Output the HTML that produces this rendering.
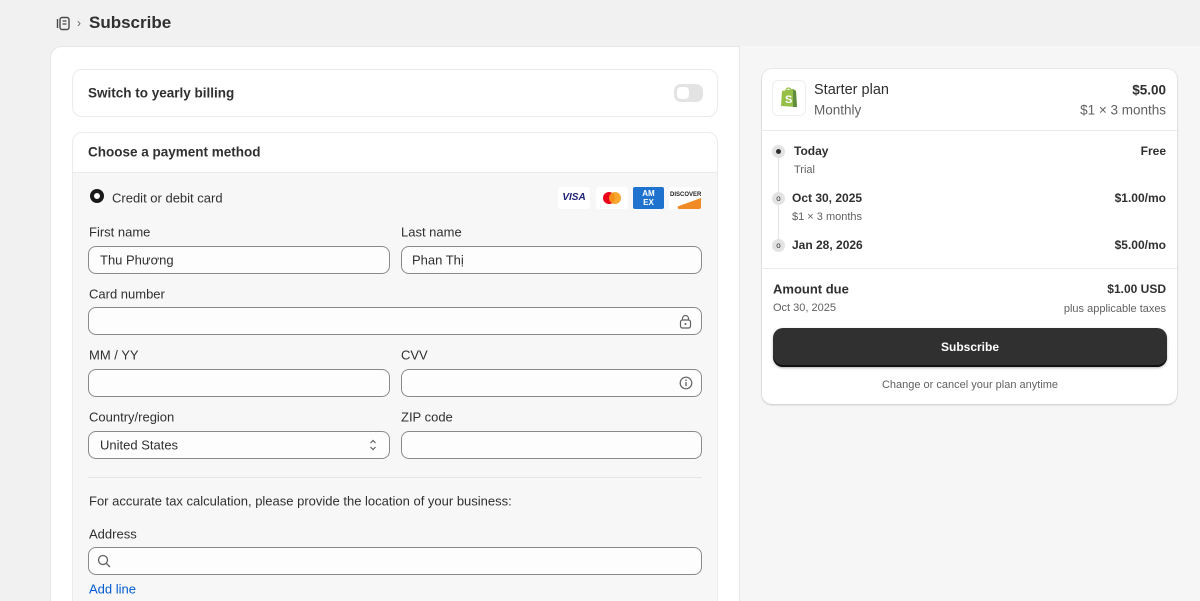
<!DOCTYPE html>
<html style="width:1200px;height:601px;overflow:hidden"><head><meta charset="utf-8"><style>
*{box-sizing:border-box;margin:0;padding:0}
body{width:1200px;height:601px;overflow:hidden;background:#f1f1f1;font-family:"Liberation Sans","Noto Sans CJK JP",sans-serif;color:#303030}
#w{position:relative;width:1200px;height:601px;overflow:hidden}
.a{position:absolute}
.t{position:absolute;white-space:nowrap;transform:translateY(-50%)}
.inp{position:absolute;height:28px;border:1px solid #8a8a8a;border-radius:8px;background:#fdfdfd}
.lbl{font-size:13px;color:#303030}
.b{font-weight:700}
.g{color:#616161}
</style></head><body><div id="w">
<svg class="a" style="left:56px;top:16px" width="15" height="15" viewBox="0 0 15 15"><path d="M1.5 3v9" stroke="#4a4a4a" stroke-width="1.4"/><rect x="4" y="1.5" width="9" height="12" rx="2" fill="none" stroke="#4a4a4a" stroke-width="1.4"/><path d="M6.5 5h4M6.5 8h4" stroke="#4a4a4a" stroke-width="1.2"/></svg>
<div class="t g" style="left:77px;top:23px;font-size:12px">›</div>
<div class="t" style="left:89px;top:23px;font-size:17px;font-weight:700;color:#303030">Subscribe</div>

<div class="a" style="left:50px;top:46px;width:690px;height:580px;background:#fff;border-radius:12px 0 0 0;border:1px solid #e6e6e6"></div>
<div class="a" style="left:740px;top:46px;width:460px;height:580px;background:#f6f6f6"></div>

<div class="a" style="left:72px;top:69px;width:646px;height:48px;border:1px solid #ebebeb;border-radius:10px;background:#fff"></div>
<div class="t b" style="left:88px;top:93px;font-size:13.5px">Switch to yearly billing</div>
<div class="a" style="left:674px;top:84px;width:29px;height:18px;border-radius:7px;background:#e3e3e3"></div>
<div class="a" style="left:677px;top:87px;width:12px;height:12px;border-radius:4px;background:#fff"></div>

<div class="a" style="left:72px;top:132px;width:646px;height:490px;border:1px solid #ebebeb;border-radius:10px;background:#fff;overflow:hidden">
<div class="a" style="left:0;top:39px;width:646px;height:460px;background:#f7f7f7;border-top:1px solid #ebebeb"></div>
</div>
<div class="t b" style="left:88px;top:152px;font-size:13.5px">Choose a payment method</div>

<div class="a" style="left:90px;top:189px;width:14px;height:14px;border-radius:50%;border:4px solid #1a1a1a;background:#fff"></div>
<div class="t" style="left:112px;top:198px;font-size:13px">Credit or debit card</div>
<div class="a" style="left:558px;top:187px;width:32px;height:22px;background:#fff;border-radius:3px;font:italic 700 10px 'Liberation Sans';color:#1a1f71;text-align:center;line-height:22px">VISA</div>
<div class="a" style="left:596px;top:187px;width:32px;height:22px;background:#fff;border-radius:3px"><div class="a" style="left:7px;top:5px;width:12px;height:12px;border-radius:50%;background:#eb001b"></div><div class="a" style="left:13px;top:5px;width:12px;height:12px;border-radius:50%;background:#f79e1b;opacity:.9"></div></div>
<div class="a" style="left:633px;top:187px;width:31px;height:22px;background:#1f72cd;border-radius:2px;color:#fff;font:700 8px 'Liberation Sans';text-align:center;line-height:9px;padding-top:2px">AM<br>EX</div>
<div class="a" style="left:669px;top:187px;width:32px;height:22px;background:#fff;border-radius:2px;overflow:hidden;font:700 6px 'Liberation Sans';color:#222;padding:5px 0 0 1px">DISCOVER<div class="a" style="left:10px;top:14px;width:30px;height:14px;background:#f08a24;transform:rotate(-20deg)"></div></div>

<div class="t lbl" style="left:89px;top:232px">First name</div>
<div class="t lbl" style="left:401px;top:232px">Last name</div>
<div class="inp" style="left:88px;top:246px;width:302px"></div>
<div class="inp" style="left:401px;top:246px;width:301px"></div>
<div class="t" style="left:100px;top:260px;font-size:13px">Thu Phương</div>
<div class="t" style="left:412px;top:260px;font-size:13px">Phan Thị</div>

<div class="t lbl" style="left:89px;top:294px">Card number</div>
<div class="inp" style="left:88px;top:307px;width:614px"></div>
<svg class="a" style="left:679px;top:314px" width="13" height="15" viewBox="0 0 13 15"><rect x="1.5" y="6" width="10" height="8" rx="2" fill="none" stroke="#616161" stroke-width="1.2"/><path d="M3.5 6V4.5a3 3 0 016 0V6" fill="none" stroke="#616161" stroke-width="1.2"/><circle cx="6.5" cy="10" r="1" fill="#616161"/></svg>

<div class="t lbl" style="left:89px;top:355px">MM / YY</div>
<div class="t lbl" style="left:401px;top:355px">CVV</div>
<div class="inp" style="left:88px;top:369px;width:302px"></div>
<div class="inp" style="left:401px;top:369px;width:301px"></div>
<svg class="a" style="left:679px;top:376px" width="14" height="14" viewBox="0 0 14 14"><circle cx="7" cy="7" r="5.8" fill="none" stroke="#616161" stroke-width="1.2"/><path d="M7 6v4.2" stroke="#616161" stroke-width="1.3"/><circle cx="7" cy="4.2" r=".8" fill="#616161"/></svg>

<div class="t lbl" style="left:89px;top:417px">Country/region</div>
<div class="t lbl" style="left:401px;top:417px">ZIP code</div>
<div class="inp" style="left:88px;top:431px;width:302px"></div>
<div class="inp" style="left:401px;top:431px;width:301px"></div>
<div class="t" style="left:100px;top:445px;font-size:13px">United States</div>
<svg class="a" style="left:368px;top:437px" width="10" height="16" viewBox="0 0 10 16"><path d="M2.5 6L5 3.5 7.5 6M2.5 10L5 12.5 7.5 10" fill="none" stroke="#616161" stroke-width="1.2"/></svg>

<div class="a" style="left:88px;top:477px;width:614px;height:1px;background:#e6e6e6"></div>
<div class="t" style="left:89px;top:501px;font-size:13px">For accurate tax calculation, please provide the location of your business:</div>
<div class="t lbl" style="left:89px;top:534px">Address</div>
<div class="inp" style="left:88px;top:547px;width:614px"></div>
<svg class="a" style="left:97px;top:554px" width="14" height="14" viewBox="0 0 14 14"><circle cx="6" cy="6" r="4.5" fill="none" stroke="#616161" stroke-width="1.3"/><path d="M9.3 9.3L13 13" stroke="#616161" stroke-width="1.3"/></svg>
<div class="t" style="left:89px;top:589px;font-size:13px;color:#005bd3">Add line</div>

<div class="a" style="left:762px;top:69px;width:415px;height:335px;background:#fff;border-radius:10px;box-shadow:0 1px 2px rgba(0,0,0,.15),0 0 0 1px #ececec"></div>
<div class="a" style="left:772px;top:80px;width:34px;height:36px;border:1px solid #eee;border-radius:6px;background:#fff"></div>
<svg class="a" style="left:779px;top:85px" width="20" height="24" viewBox="0 0 20 24"><path d="M3 6l11-2 3 2 1 16-16-1z" fill="#95bf47"/><path d="M14 4l3 2 1 16-4 0z" fill="#5e8e3e"/><path d="M7 6c0-4 5-4 5 0" fill="none" stroke="#95bf47" stroke-width="1.3"/><text x="6" y="18" font-family="Liberation Sans" font-weight="700" font-size="11" fill="#fff">S</text></svg>
<div class="t" style="left:814px;top:90px;font-size:14.5px;font-weight:500;color:#303030">Starter plan</div>
<div class="t g" style="left:814px;top:110px;font-size:13.5px">Monthly</div>
<div class="t b" style="right:34px;top:90px;font-size:13.5px">$5.00</div>
<div class="t g" style="right:34px;top:110px;font-size:13.5px">$1 × 3 months</div>
<div class="a" style="left:762px;top:130px;width:415px;height:1px;background:#ebebeb"></div>

<div class="a" style="left:778px;top:152px;width:1px;height:93px;background:#e3e3e3"></div>
<div class="a" style="left:772px;top:145px;width:13px;height:13px;border-radius:50%;background:#e3e3e3"></div>
<div class="a" style="left:776px;top:149px;width:5px;height:5px;border-radius:50%;background:#303030"></div>
<div class="a" style="left:772px;top:192px;width:13px;height:13px;border-radius:50%;background:#e3e3e3;font-size:8px;text-align:center;line-height:13px">o</div>
<div class="a" style="left:772px;top:239px;width:13px;height:13px;border-radius:50%;background:#e3e3e3;font-size:8px;text-align:center;line-height:13px">o</div>
<div class="t b" style="left:794px;top:151px;font-size:12px">Today</div>
<div class="t g" style="left:794px;top:170px;font-size:11px">Trial</div>
<div class="t b" style="left:792px;top:198px;font-size:12px">Oct 30, 2025</div>
<div class="t g" style="left:792px;top:217px;font-size:11px">$1 × 3 months</div>
<div class="t b" style="left:792px;top:245px;font-size:12px">Jan 28, 2026</div>
<div class="t b" style="right:34px;top:151px;font-size:12px">Free</div>
<div class="t b" style="right:34px;top:198px;font-size:12px">$1.00/mo</div>
<div class="t b" style="right:34px;top:245px;font-size:12px">$5.00/mo</div>
<div class="a" style="left:762px;top:268px;width:415px;height:1px;background:#ebebeb"></div>

<div class="t b" style="left:773px;top:289px;font-size:13px">Amount due</div>
<div class="t g" style="left:773px;top:308px;font-size:11px">Oct 30, 2025</div>
<div class="t b" style="right:34px;top:289px;font-size:12px">$1.00 USD</div>
<div class="t g" style="right:34px;top:309px;font-size:11px">plus applicable taxes</div>
<div class="a" style="left:773px;top:328px;width:394px;height:39px;background:#303030;border-radius:10px;box-shadow:inset 0 -2px 0 #111,0 1px 2px rgba(0,0,0,.3);color:#fff;font-size:12px;font-weight:700;text-align:center;line-height:38px">Subscribe</div>
<div class="t g" style="left:970px;top:385px;font-size:11px;transform:translate(-50%,-50%)">Change or cancel your plan anytime</div>
</div></body></html>
